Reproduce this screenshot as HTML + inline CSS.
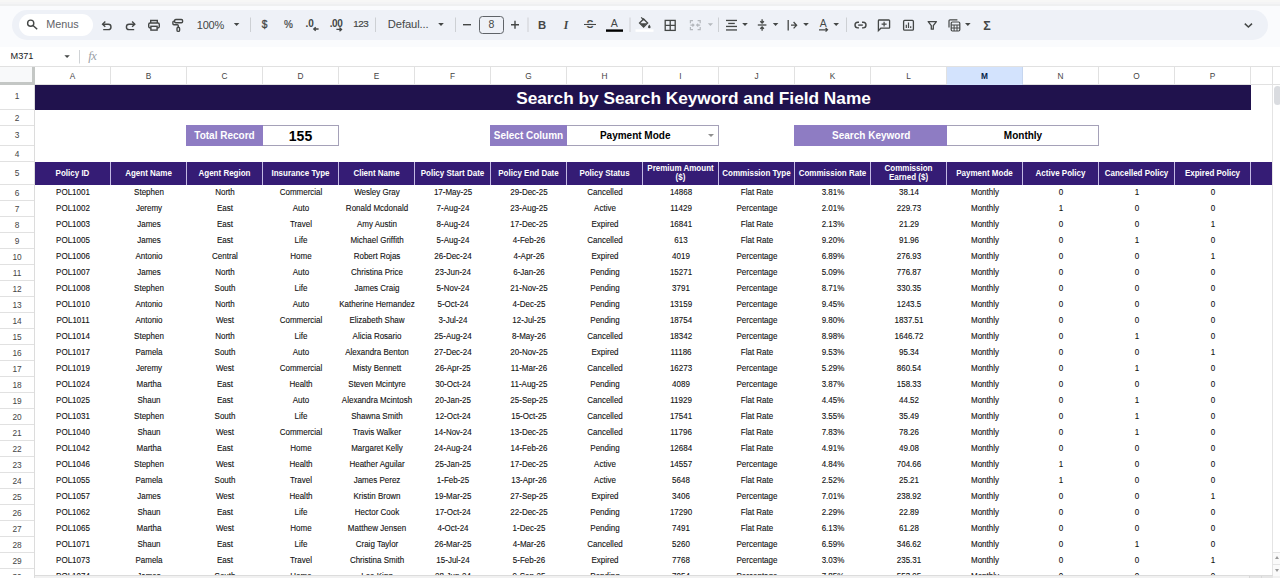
<!DOCTYPE html>
<html lang="en">
<head>
<meta charset="utf-8">
<title>Search by Search Keyword and Field Name</title>
<style>
*{box-sizing:border-box;margin:0;padding:0}
html,body{width:1280px;height:578px;overflow:hidden;background:#fff}
body{position:relative;font-family:"Liberation Sans",sans-serif;color:#000}
#topstrip{position:absolute;left:0;top:0;width:1280px;height:6px;background:linear-gradient(#f7f7f6 0,#f7f7f6 2px,#f4f4f5 2px,#f4f4f5 4px,#eff0f1 4px,#eff0f1 6px)}
#chrome{position:absolute;left:0;top:6px;width:1280px;height:41px;background:#fafbfd}
#tb{position:absolute;left:0;top:0;width:1280px;height:67px}
#fbar{position:absolute;left:0;top:47px;width:1280px;height:20px;background:#fff;border-bottom:1px solid #e1e1e1}
#colhdr{position:absolute;left:0;top:67px;width:1280px;height:18px;background:#fff;border-bottom:1px solid #e1e1e1}
.ch{position:absolute;top:0;width:76px;height:17px;line-height:18px;text-align:center;font-size:8.3px;color:#444;border-right:1px solid #e1e1e1}
.ch.sel{background:#d3e3fd;color:#041e49;font-weight:bold;height:18px;border-right-color:#c6d6ef}
#corner{position:absolute;left:0;top:67px;width:35px;height:18px;background:#f8f9fa;border-right:3px solid #c4c7c5;border-bottom:3px solid #c4c7c5}
#rowhdr{position:absolute;left:0;top:0;width:35px;height:578px}
#rowline{position:absolute;left:34px;top:85px;width:1px;height:493px;background:#dcdcdc}
.rh{position:absolute;left:0;width:34px;text-align:center;font-size:8.3px;color:#444;border-bottom:1px solid #e1e1e1;box-sizing:content-box}
.rh span{display:inline-block;transform:scaleY(1.12)}
#title{position:absolute;overflow:hidden;background:#20124d;color:#fff;font-weight:bold;font-size:17.25px;text-align:center;line-height:26px;white-space:nowrap}
.lbl{position:absolute;top:125px;height:21px;background:#8e7cc3;color:#fff;font-weight:bold;font-size:10px;line-height:22px;text-align:center;white-space:nowrap}
.val{position:absolute;top:125px;height:21px;background:#fff;border:1px solid #a5a1b8;border-left:none;color:#000;font-weight:bold;font-size:10px;line-height:19px;text-align:center;white-space:nowrap}
.val.big{font-size:14px;line-height:21px}
.dd{position:absolute;right:4.500px;top:7.500px;width:0;height:0;border-left:3px solid transparent;border-right:3px solid transparent;border-top:3.500px solid #8f8f8f}
#hrow{position:absolute;background:#351c75}
.hc{position:absolute;top:0;width:76px;height:23px;border-right:1px solid #c3b9e3;color:#fff;font-weight:bold;font-size:8px;line-height:8.2px;text-align:center;display:flex;align-items:center;justify-content:center;white-space:nowrap}
.hc span{display:block;transform:scaleY(1.16);transform-origin:50% 50%;position:relative;top:1px}
.hc.two span{top:0.3px}
#data{position:absolute;left:0;top:0;width:1271px;height:575px;overflow:hidden}
.dr{position:absolute;left:35px;height:16px;width:1216px;display:flex;transform:scaleY(1.16);transform-origin:50% 55%}
.dr b{position:relative;top:0.4px;display:block;width:76px;flex:none;font-weight:normal;font-size:8px;line-height:16px;text-align:center;white-space:nowrap;color:#111;-webkit-text-stroke:0.1px #111}
#vscroll{position:absolute;left:1272px;top:85px;width:8px;height:493px;background:#fff;border-left:1px solid #e4e4e4}
.sb{position:absolute;left:1273px;width:7px;height:12px;border-top:1px solid #e4e4e4;background:#fafafa}
.sb i{position:absolute;left:1.5px;top:3.3px;width:0;height:0;border-left:2.5px solid transparent;border-right:2.5px solid transparent}
.hb{position:absolute;top:576px;height:2px;width:12px;background:#e6e6e6;border-left:1px solid #d8d8d8}
#vthumb{position:absolute;left:1274px;top:86px;width:7px;height:19px;border-radius:4px;background:#dadce0}
#hscroll{position:absolute;left:35px;top:575px;width:1245px;height:3px;background:#f1f1f1;border-top:1px solid #dcdcdc}
</style>
</head>
<body>
<div id="topstrip"></div>
<div id="chrome"></div>
<div id="fbar"></div>
<svg id="tb" viewBox="0 0 1280 67" font-family="Liberation Sans, sans-serif" fill="#444746">
<rect x="12" y="10" width="1256" height="30" rx="15" fill="#eef1f7"/>
<rect x="19" y="14" width="74" height="22" rx="11" fill="#fff"/>
<!-- search -->
<circle cx="30.700" cy="23.200" r="3.100" fill="none" stroke="#444746" stroke-width="1.400"/>
<path d="M33 25.500 L37.200 29.300" stroke="#444746" stroke-width="1.500" fill="none"/>
<text x="46.200" y="27.900" font-size="10.800" fill="#5f6368">Menus</text>
<!-- undo -->
<path d="M102.800 24.200 H108.300 A2.700 2.700 0 0 1 108.300 29.600 H103.200" fill="none" stroke="#444746" stroke-width="1.400"/>
<path d="M105.300 21.600 L102.600 24.200 L105.300 26.800" fill="none" stroke="#444746" stroke-width="1.400"/>
<!-- redo -->
<path d="M134.600 24.200 H129.100 A2.700 2.700 0 0 0 129.100 29.600 H134.200" fill="none" stroke="#444746" stroke-width="1.400"/>
<path d="M132.100 21.600 L134.800 24.200 L132.100 26.800" fill="none" stroke="#444746" stroke-width="1.400"/>
<!-- print -->
<g fill="none" stroke="#444746" stroke-width="1.4">
<path d="M150.7 23 V20.5 H157.3 V23"/>
<rect x="148.7" y="23" width="10.6" height="5" rx="1.4"/>
<rect x="150.9" y="26.3" width="6.2" height="3.8" fill="#eef1f7"/>
</g>
<!-- paint format -->
<g fill="none" stroke="#444746" stroke-width="1.4">
<rect x="174.600" y="19.500" width="8" height="3.200" rx="1.200"/>
<path d="M174.600 21.100 H173.900 a1 1 0 0 0 -1 1 V23.800 a1 1 0 0 0 1 1 H177.300 a1 1 0 0 1 1 1 V27.200"/>
<rect x="177" y="27.200" width="2.600" height="4.200" rx="1.200"/>
</g>
<text x="196.800" y="28.700" font-size="11" letter-spacing="-0.250">100%</text>
<path d="M233.8 23 h5.6 l-2.8 3z"/>
<rect x="250" y="17.5" width="1" height="14.5" fill="#cdd0d4"/>
<text x="264.700" y="28" font-size="10.200" text-anchor="middle" stroke="#444746" stroke-width=".300">$</text>
<text x="288.400" y="28" font-size="10" text-anchor="middle" stroke="#444746" stroke-width=".200">%</text>
<text x="309.7" y="27" font-size="10" text-anchor="middle" font-weight="bold">.0</text>
<path d="M318.600 29 H314 M315.700 27.200 L313.800 29 L315.700 30.800" fill="none" stroke="#444746" stroke-width="1.350"/>
<text x="336" y="27" font-size="10" text-anchor="middle" font-weight="bold" letter-spacing="-0.4">.00</text>
<path d="M336.400 29.400 H341.300 M339.500 27.600 L341.500 29.400 L339.500 31.200" fill="none" stroke="#444746" stroke-width="1.350"/>
<text x="360.800" y="27.100" font-size="9.800" text-anchor="middle" letter-spacing="-0.500" stroke="#444746" stroke-width=".200">123</text>
<rect x="375" y="17.5" width="1" height="14.5" fill="#cdd0d4"/>
<text x="387.800" y="27.700" font-size="11.200" letter-spacing="-0.100">Defaul...</text>
<path d="M438.2 23 h5.6 l-2.8 3z"/>
<rect x="455" y="17.5" width="1" height="14.5" fill="#cdd0d4"/>
<rect x="463" y="24" width="8" height="1.4"/>
<rect x="479.5" y="16.5" width="24" height="17" rx="3" fill="none" stroke="#5f6368" stroke-width="1"/>
<text x="491.400" y="28.100" font-size="10.500" text-anchor="middle">8</text>
<path d="M511 24.7 h8 M515 20.7 v8" stroke="#444746" stroke-width="1.4" fill="none"/>
<rect x="527.5" y="17.5" width="1" height="14.500" fill="#cdd0d4"/>
<text x="542" y="28.6" font-size="11.3" text-anchor="middle" font-weight="bold">B</text>
<text x="566" y="28.6" font-size="11.6" text-anchor="middle" font-weight="bold" font-style="italic" font-family="Liberation Serif, serif">I</text>
<!-- strikethrough -->
<text x="590" y="28.4" font-size="10.6" text-anchor="middle" font-weight="bold">S</text>
<rect x="584" y="23.8" width="12" height="1.3" fill="#444746"/>
<rect x="584" y="22.8" width="12" height="1" fill="#eef1f7"/>
<rect x="584" y="25.1" width="12" height="1" fill="#eef1f7"/>
<!-- text colour -->
<text x="614.4" y="27.4" font-size="10.6" text-anchor="middle">A</text>
<rect x="606" y="29.4" width="17" height="2.4" fill="#000"/>
<rect x="629.500" y="17.5" width="1" height="14.500" fill="#cdd0d4"/>
<!-- fill colour -->
<rect x="635.5" y="29.4" width="18" height="2.4" fill="#fff"/>
<g>
<path d="M639.600 22.9 L643.600 18.900 L647.600 22.9 L643.600 26.900 Z" fill="none" stroke="#444746" stroke-width="1.400"/>
<path d="M640.400 23.3 H646.800 L643.600 26.5 Z"/>
<path d="M641.200 17.400 L643.900 20.100" stroke="#444746" stroke-width="1.300" fill="none"/>
<path d="M649.300 24.400 q1.300 1.800 1.300 2.600 a1.300 1.300 0 0 1 -2.600 0 q0 -.8 1.300 -2.600z"/>
</g>
<!-- borders -->
<g fill="none" stroke="#444746" stroke-width="1.300">
<rect x="665.2" y="20.400" width="10" height="10"/>
<path d="M670.2 20.400 v10 M665.2 25.400 h10"/>
</g>
<!-- merge (disabled) -->
<g fill="none" stroke="#b4b8bd" stroke-width="1.200">
<path d="M693 20.600 H690.400 V23.200 M697.600 20.600 H700.200 V23.200 M690.400 27 V29.600 H693 M700.200 27 V29.600 H697.600"/>
<path d="M690.400 25.100 H693.800 M692.400 23.700 L693.900 25.100 L692.400 26.500 M700.200 25.100 H696.800 M698.200 23.700 L696.700 25.100 L698.200 26.500"/>
</g>
<path d="M707.800 23.200 h5.200 l-2.600 2.800z" fill="#b4b8bd"/>
<rect x="718" y="17.5" width="1" height="14.500" fill="#cdd0d4"/>
<!-- h align -->
<g fill="#444746">
<rect x="726" y="19.800" width="11" height="1.300"/>
<rect x="728.200" y="22.800" width="6.600" height="1.300"/>
<rect x="726" y="25.800" width="11" height="1.300"/>
<rect x="726" y="29.300" width="11" height="1.300"/>
</g>
<path d="M742.200 23 h5.600 l-2.800 3z"/>
<!-- v align -->
<g fill="none" stroke="#444746" stroke-width="1.300">
<path d="M757.800 25 h8.600"/>
<path d="M762.100 19.300 v3.600 M760.300 21.300 l1.800 1.800 l1.800 -1.800"/>
<path d="M762.100 30.800 v-3.600 M760.300 28.800 l1.800 -1.800 l1.800 1.800"/>
</g>
<path d="M772.800 23 h5.600 l-2.800 3z"/>
<!-- wrap -->
<g fill="none" stroke="#444746" stroke-width="1.300">
<path d="M788.200 20 v10.400"/>
<path d="M791 25.200 h5.400 M793.600 22 l3 3.200 l-3 3.200"/>
</g>
<path d="M803.200 23 h5.600 l-2.800 3z"/>
<!-- rotate -->
<text x="823.300" y="27.300" font-size="10.400" text-anchor="middle">A</text>
<path d="M819 29.800 h8.300 M825.600 28 l1.900 1.800 l-1.900 1.800" fill="none" stroke="#444746" stroke-width="1.200"/>
<path d="M833.400 23 h5.600 l-2.800 3z"/>
<rect x="846" y="17.5" width="1" height="14.500" fill="#cdd0d4"/>
<!-- link -->
<g fill="none" stroke="#444746" stroke-width="1.400">
<path d="M859 22.300 H857.800 a2.800 2.800 0 0 0 0 5.600 H859"/>
<path d="M862 22.300 H863.200 a2.800 2.800 0 0 1 0 5.600 H862"/>
<path d="M858.200 25.100 h4.600"/>
</g>
<!-- comment -->
<g fill="none" stroke="#444746" stroke-width="1.300">
<path d="M878.400 30.600 V20.800 a.8 .8 0 0 1 .8 -.8 H888.800 a.8 .8 0 0 1 .8 .8 V27.400 a.8 .8 0 0 1 -.8 .8 H880.800 Z"/>
<path d="M881.600 24.100 h5 M884.100 21.700 v4.800" stroke-width="1.200"/>
</g>
<!-- chart -->
<g fill="none" stroke="#444746" stroke-width="1.300">
<rect x="903.600" y="20.400" width="9.800" height="9.800" rx="1"/>
<path d="M906.300 28 v-3.200 M908.500 28 v-5.400 M910.700 28 v-1.800" stroke-width="1.200"/>
</g>
<!-- filter -->
<path d="M928.200 21.600 H936.400 L933.300 25.600 V29.200 H931.300 V25.600 Z" fill="none" stroke="#444746" stroke-width="1.300" stroke-linejoin="round"/>
<!-- table views -->
<g fill="none" stroke="#444746" stroke-width="1.200">
<path d="M949 27.600 V20.800 a1 1 0 0 1 1 -1 H957.400"/>
<rect x="951.200" y="22" width="8.600" height="9" rx="1.200"/>
<path d="M951.200 25 h8.600 M951.200 28 h8.600 M954.100 25 v6 M957 25 v6" stroke-width="1"/>
</g>
<path d="M965 23 h5.600 l-2.800 3z"/>
<!-- sigma -->
<text x="987" y="29.600" font-size="12.500" text-anchor="middle" font-weight="bold">Σ</text>
<!-- chevron -->
<path d="M1244.800 23.600 L1248.400 27 L1252 23.600" fill="none" stroke="#444746" stroke-width="1.500"/>
<!-- formula bar -->
<text x="10.600" y="58.900" font-size="9.200" fill="#202124" letter-spacing="-0.100">M371</text>
<path d="M64.400 55.200 h5.400 l-2.700 2.800z" fill="#444746"/>
<rect x="79" y="50" width="1" height="13.500" fill="#d0d3d6"/>
<text x="88.300" y="60.400" font-size="12.500" font-style="italic" fill="#9aa0a6" font-family="Liberation Serif, serif" letter-spacing="-0.5">fx</text>
</svg>

<div id="colhdr">
<div class="ch" style="left:35px">A</div>
<div class="ch" style="left:111px">B</div>
<div class="ch" style="left:187px">C</div>
<div class="ch" style="left:263px">D</div>
<div class="ch" style="left:339px">E</div>
<div class="ch" style="left:415px">F</div>
<div class="ch" style="left:491px">G</div>
<div class="ch" style="left:567px">H</div>
<div class="ch" style="left:643px">I</div>
<div class="ch" style="left:719px">J</div>
<div class="ch" style="left:795px">K</div>
<div class="ch" style="left:871px">L</div>
<div class="ch sel" style="left:947px">M</div>
<div class="ch" style="left:1023px">N</div>
<div class="ch" style="left:1099px">O</div>
<div class="ch" style="left:1175px">P</div>
<div class="ch" style="left:1251px;width:22px"></div>
</div>
<div id="corner"></div>
<div id="rowhdr">
<div class="rh" style="top:85px;height:24px;line-height:22px"><span>1</span></div>
<div class="rh" style="top:110px;height:15px;line-height:17.2px"><span>2</span></div>
<div class="rh" style="top:126px;height:19px;line-height:19.7px"><span>3</span></div>
<div class="rh" style="top:146px;height:15px;line-height:17.2px"><span>4</span></div>
<div class="rh" style="top:162px;height:22px;line-height:22.7px"><span>5</span></div>
<div class="rh" style="top:185px;height:15px;line-height:17.2px"><span>6</span></div>
<div class="rh" style="top:201px;height:15px;line-height:17.2px"><span>7</span></div>
<div class="rh" style="top:217px;height:15px;line-height:17.2px"><span>8</span></div>
<div class="rh" style="top:233px;height:15px;line-height:17.2px"><span>9</span></div>
<div class="rh" style="top:249px;height:15px;line-height:17.2px"><span>10</span></div>
<div class="rh" style="top:265px;height:15px;line-height:17.2px"><span>11</span></div>
<div class="rh" style="top:281px;height:15px;line-height:17.2px"><span>12</span></div>
<div class="rh" style="top:297px;height:15px;line-height:17.2px"><span>13</span></div>
<div class="rh" style="top:313px;height:15px;line-height:17.2px"><span>14</span></div>
<div class="rh" style="top:329px;height:15px;line-height:17.2px"><span>15</span></div>
<div class="rh" style="top:345px;height:15px;line-height:17.2px"><span>16</span></div>
<div class="rh" style="top:361px;height:15px;line-height:17.2px"><span>17</span></div>
<div class="rh" style="top:377px;height:15px;line-height:17.2px"><span>18</span></div>
<div class="rh" style="top:393px;height:15px;line-height:17.2px"><span>19</span></div>
<div class="rh" style="top:409px;height:15px;line-height:17.2px"><span>20</span></div>
<div class="rh" style="top:425px;height:15px;line-height:17.2px"><span>21</span></div>
<div class="rh" style="top:441px;height:15px;line-height:17.2px"><span>22</span></div>
<div class="rh" style="top:457px;height:15px;line-height:17.2px"><span>23</span></div>
<div class="rh" style="top:473px;height:15px;line-height:17.2px"><span>24</span></div>
<div class="rh" style="top:489px;height:15px;line-height:17.2px"><span>25</span></div>
<div class="rh" style="top:505px;height:15px;line-height:17.2px"><span>26</span></div>
<div class="rh" style="top:521px;height:15px;line-height:17.2px"><span>27</span></div>
<div class="rh" style="top:537px;height:15px;line-height:17.2px"><span>28</span></div>
<div class="rh" style="top:553px;height:15px;line-height:17.2px"><span>29</span></div>
<div class="rh" style="top:569px;height:15px;line-height:17.2px"><span>30</span></div>
</div>
<div id="title" style="left:35px;top:85px;width:1216px;height:25px"><span style="position:absolute;left:0;top:0;width:1317px;text-align:center">Search by Search Keyword and Field Name</span></div>
<div class="lbl" style="left:186px;width:77px">Total Record</div>
<div class="val big" style="left:263px;width:76px">155</div>
<div class="lbl" style="left:490px;width:77px">Select Column</div>
<div class="val" style="left:567px;width:152px"><span style="position:relative;left:-7.3px">Payment Mode</span><i class="dd"></i></div>
<div class="lbl" style="left:794px;width:153px;padding-left:1.5px">Search Keyword</div>
<div class="val" style="left:947px;width:152px;padding-left:1px">Monthly</div>
<div id="hrow" style="left:35px;top:161.6px;width:1237px;height:23px">
<div class="hc" style="left:0px"><span>Policy ID</span></div>
<div class="hc" style="left:76px"><span>Agent Name</span></div>
<div class="hc" style="left:152px"><span>Agent Region</span></div>
<div class="hc" style="left:228px"><span>Insurance Type</span></div>
<div class="hc" style="left:304px"><span>Client Name</span></div>
<div class="hc" style="left:380px"><span>Policy Start Date</span></div>
<div class="hc" style="left:456px"><span>Policy End Date</span></div>
<div class="hc" style="left:532px"><span>Policy Status</span></div>
<div class="hc two" style="left:608px"><span>Premium Amount<br>($)</span></div>
<div class="hc" style="left:684px"><span>Commission Type</span></div>
<div class="hc" style="left:760px"><span>Commission Rate</span></div>
<div class="hc two" style="left:836px"><span>Commission<br>Earned ($)</span></div>
<div class="hc" style="left:912px"><span>Payment Mode</span></div>
<div class="hc" style="left:988px"><span>Active Policy</span></div>
<div class="hc" style="left:1064px"><span>Cancelled Policy</span></div>
<div class="hc" style="left:1140px"><span>Expired Policy</span></div>
</div>
<div id="data">
<div class="dr" style="top:185px"><b>POL1001</b><b>Stephen</b><b>North</b><b>Commercial</b><b>Wesley Gray</b><b>17-May-25</b><b>29-Dec-25</b><b>Cancelled</b><b>14868</b><b>Flat Rate</b><b>3.81%</b><b>38.14</b><b>Monthly</b><b>0</b><b>1</b><b>0</b></div>
<div class="dr" style="top:201px"><b>POL1002</b><b>Jeremy</b><b>East</b><b>Auto</b><b>Ronald Mcdonald</b><b>7-Aug-24</b><b>23-Aug-25</b><b>Active</b><b>11429</b><b>Percentage</b><b>2.01%</b><b>229.73</b><b>Monthly</b><b>1</b><b>0</b><b>0</b></div>
<div class="dr" style="top:217px"><b>POL1003</b><b>James</b><b>East</b><b>Travel</b><b>Amy Austin</b><b>8-Aug-24</b><b>17-Dec-25</b><b>Expired</b><b>16841</b><b>Flat Rate</b><b>2.13%</b><b>21.29</b><b>Monthly</b><b>0</b><b>0</b><b>1</b></div>
<div class="dr" style="top:233px"><b>POL1005</b><b>James</b><b>East</b><b>Life</b><b>Michael Griffith</b><b>5-Aug-24</b><b>4-Feb-26</b><b>Cancelled</b><b>613</b><b>Flat Rate</b><b>9.20%</b><b>91.96</b><b>Monthly</b><b>0</b><b>1</b><b>0</b></div>
<div class="dr" style="top:249px"><b>POL1006</b><b>Antonio</b><b>Central</b><b>Home</b><b>Robert Rojas</b><b>26-Dec-24</b><b>4-Apr-26</b><b>Expired</b><b>4019</b><b>Percentage</b><b>6.89%</b><b>276.93</b><b>Monthly</b><b>0</b><b>0</b><b>1</b></div>
<div class="dr" style="top:265px"><b>POL1007</b><b>James</b><b>North</b><b>Auto</b><b>Christina Price</b><b>23-Jun-24</b><b>6-Jan-26</b><b>Pending</b><b>15271</b><b>Percentage</b><b>5.09%</b><b>776.87</b><b>Monthly</b><b>0</b><b>0</b><b>0</b></div>
<div class="dr" style="top:281px"><b>POL1008</b><b>Stephen</b><b>South</b><b>Life</b><b>James Craig</b><b>5-Nov-24</b><b>21-Nov-25</b><b>Pending</b><b>3791</b><b>Percentage</b><b>8.71%</b><b>330.35</b><b>Monthly</b><b>0</b><b>0</b><b>0</b></div>
<div class="dr" style="top:297px"><b>POL1010</b><b>Antonio</b><b>North</b><b>Auto</b><b>Katherine Hernandez</b><b>5-Oct-24</b><b>4-Dec-25</b><b>Pending</b><b>13159</b><b>Percentage</b><b>9.45%</b><b>1243.5</b><b>Monthly</b><b>0</b><b>0</b><b>0</b></div>
<div class="dr" style="top:313px"><b>POL1011</b><b>Antonio</b><b>West</b><b>Commercial</b><b>Elizabeth Shaw</b><b>3-Jul-24</b><b>12-Jul-25</b><b>Pending</b><b>18754</b><b>Percentage</b><b>9.80%</b><b>1837.51</b><b>Monthly</b><b>0</b><b>0</b><b>0</b></div>
<div class="dr" style="top:329px"><b>POL1014</b><b>Stephen</b><b>North</b><b>Life</b><b>Alicia Rosario</b><b>25-Aug-24</b><b>8-May-26</b><b>Cancelled</b><b>18342</b><b>Percentage</b><b>8.98%</b><b>1646.72</b><b>Monthly</b><b>0</b><b>1</b><b>0</b></div>
<div class="dr" style="top:345px"><b>POL1017</b><b>Pamela</b><b>South</b><b>Auto</b><b>Alexandra Benton</b><b>27-Dec-24</b><b>20-Nov-25</b><b>Expired</b><b>11186</b><b>Flat Rate</b><b>9.53%</b><b>95.34</b><b>Monthly</b><b>0</b><b>0</b><b>1</b></div>
<div class="dr" style="top:361px"><b>POL1019</b><b>Jeremy</b><b>West</b><b>Commercial</b><b>Misty Bennett</b><b>26-Apr-25</b><b>11-Mar-26</b><b>Cancelled</b><b>16273</b><b>Percentage</b><b>5.29%</b><b>860.54</b><b>Monthly</b><b>0</b><b>1</b><b>0</b></div>
<div class="dr" style="top:377px"><b>POL1024</b><b>Martha</b><b>East</b><b>Health</b><b>Steven Mcintyre</b><b>30-Oct-24</b><b>11-Aug-25</b><b>Pending</b><b>4089</b><b>Percentage</b><b>3.87%</b><b>158.33</b><b>Monthly</b><b>0</b><b>0</b><b>0</b></div>
<div class="dr" style="top:393px"><b>POL1025</b><b>Shaun</b><b>East</b><b>Auto</b><b>Alexandra Mcintosh</b><b>20-Jan-25</b><b>25-Sep-25</b><b>Cancelled</b><b>11929</b><b>Flat Rate</b><b>4.45%</b><b>44.52</b><b>Monthly</b><b>0</b><b>1</b><b>0</b></div>
<div class="dr" style="top:409px"><b>POL1031</b><b>Stephen</b><b>South</b><b>Life</b><b>Shawna Smith</b><b>12-Oct-24</b><b>15-Oct-25</b><b>Cancelled</b><b>17541</b><b>Flat Rate</b><b>3.55%</b><b>35.49</b><b>Monthly</b><b>0</b><b>1</b><b>0</b></div>
<div class="dr" style="top:425px"><b>POL1040</b><b>Shaun</b><b>West</b><b>Commercial</b><b>Travis Walker</b><b>14-Nov-24</b><b>13-Dec-25</b><b>Cancelled</b><b>11796</b><b>Flat Rate</b><b>7.83%</b><b>78.26</b><b>Monthly</b><b>0</b><b>1</b><b>0</b></div>
<div class="dr" style="top:441px"><b>POL1042</b><b>Martha</b><b>East</b><b>Home</b><b>Margaret Kelly</b><b>24-Aug-24</b><b>14-Feb-26</b><b>Pending</b><b>12684</b><b>Flat Rate</b><b>4.91%</b><b>49.08</b><b>Monthly</b><b>0</b><b>0</b><b>0</b></div>
<div class="dr" style="top:457px"><b>POL1046</b><b>Stephen</b><b>West</b><b>Health</b><b>Heather Aguilar</b><b>25-Jan-25</b><b>17-Dec-25</b><b>Active</b><b>14557</b><b>Percentage</b><b>4.84%</b><b>704.66</b><b>Monthly</b><b>1</b><b>0</b><b>0</b></div>
<div class="dr" style="top:473px"><b>POL1055</b><b>Pamela</b><b>South</b><b>Travel</b><b>James Perez</b><b>1-Feb-25</b><b>13-Apr-26</b><b>Active</b><b>5648</b><b>Flat Rate</b><b>2.52%</b><b>25.21</b><b>Monthly</b><b>1</b><b>0</b><b>0</b></div>
<div class="dr" style="top:489px"><b>POL1057</b><b>James</b><b>West</b><b>Health</b><b>Kristin Brown</b><b>19-Mar-25</b><b>27-Sep-25</b><b>Expired</b><b>3406</b><b>Percentage</b><b>7.01%</b><b>238.92</b><b>Monthly</b><b>0</b><b>0</b><b>1</b></div>
<div class="dr" style="top:505px"><b>POL1062</b><b>Shaun</b><b>East</b><b>Life</b><b>Hector Cook</b><b>17-Oct-24</b><b>22-Dec-25</b><b>Pending</b><b>17290</b><b>Flat Rate</b><b>2.29%</b><b>22.89</b><b>Monthly</b><b>0</b><b>0</b><b>0</b></div>
<div class="dr" style="top:521px"><b>POL1065</b><b>Martha</b><b>West</b><b>Home</b><b>Matthew Jensen</b><b>4-Oct-24</b><b>1-Dec-25</b><b>Pending</b><b>7491</b><b>Flat Rate</b><b>6.13%</b><b>61.28</b><b>Monthly</b><b>0</b><b>0</b><b>0</b></div>
<div class="dr" style="top:537px"><b>POL1071</b><b>Shaun</b><b>East</b><b>Life</b><b>Craig Taylor</b><b>26-Mar-25</b><b>4-Mar-26</b><b>Cancelled</b><b>5260</b><b>Percentage</b><b>6.59%</b><b>346.62</b><b>Monthly</b><b>0</b><b>1</b><b>0</b></div>
<div class="dr" style="top:553px"><b>POL1073</b><b>Pamela</b><b>East</b><b>Travel</b><b>Christina Smith</b><b>15-Jul-24</b><b>5-Feb-26</b><b>Expired</b><b>7768</b><b>Percentage</b><b>3.03%</b><b>235.31</b><b>Monthly</b><b>0</b><b>0</b><b>1</b></div>
<div class="dr" style="top:569px"><b>POL1074</b><b>James</b><b>South</b><b>Home</b><b>Lee King</b><b>28-Jun-24</b><b>9-Sep-25</b><b>Pending</b><b>7054</b><b>Percentage</b><b>7.85%</b><b>553.95</b><b>Monthly</b><b>0</b><b>0</b><b>0</b></div>
</div>
<div id="rowline"></div>
<div id="vscroll"></div>
<div id="vthumb"></div>
<div id="hscroll"></div>
<div style="position:absolute;left:0;top:575px;width:34px;height:3px;background:#fff"></div>
<div class="sb" style="top:552px"><i style="border-bottom:3px solid #9a9a9a"></i></div>
<div class="sb" style="top:564px"><i style="border-top:3px solid #9a9a9a;top:4.2px"></i></div>
<div class="hb" style="left:1249px"></div>
<div class="hb" style="left:1261px"></div>
</body>
</html>
